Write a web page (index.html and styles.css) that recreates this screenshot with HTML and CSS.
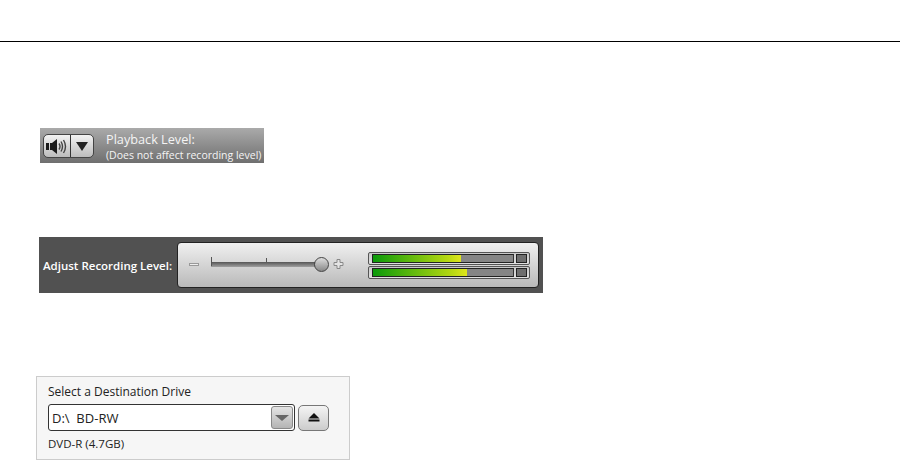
FILE: index.html
```html
<!DOCTYPE html>
<html>
<head>
  <title>Recording controls</title>
  <link rel="stylesheet" href="styles.css">
</head>
<body>
  <hr class="topRule">

  <div class="playback">
    <div class="splitBtn">
      <span class="splitPart speakerPart">
        <svg width="22" height="17" viewBox="0 0 22 17">
          <path d="M0 5h3v7H0zM4 5h2l5-4v15l-5-4H4z" fill="#1a1a1a"/>
          <path d="M13 5.500q2 3 0 6M15 3.500q3 5 0 10M17.500 2q4 6.500 0 13" fill="none" stroke="#444" stroke-width="1.400"/>
        </svg>
      </span>
      <span class="splitPart arrowPart"><span class="arrowDown"></span></span>
    </div>
    <div class="playbackText">
      <div class="playbackTitle">Playback Level:</div>
      <div class="playbackNote">(Does not affect recording level)</div>
    </div>
  </div>

  <div class="recording">
    <div class="recordingLabel">Adjust Recording Level:</div>
    <div class="recordingPanel">
      <span class="minus"></span>
      <div class="slider">
        <span class="tick tickStart"></span>
        <span class="tick tickMid"></span>
        <span class="thumb"></span>
      </div>
      <svg class="plus" width="11" height="11" viewBox="0 0 11 11">
        <path d="M4 .5h3v3h3v3H7v3H4v-3H1v-3h3z" fill="#e4e4e4" stroke="#888"/>
      </svg>
      <div class="meters">
        <div class="meter">
          <div class="meterTrack"><div class="meterFill" style="width: 63%"></div></div>
          <div class="meterPeak"></div>
        </div>
        <div class="meter">
          <div class="meterTrack"><div class="meterFill" style="width: 67%"></div></div>
          <div class="meterPeak"></div>
        </div>
      </div>
    </div>
  </div>

  <div class="drivePanel">
    <div class="driveTitle">Select a Destination Drive</div>
    <div class="driveRow">
      <div class="driveSelect">
        <span class="driveValue">D:\&nbsp; BD-RW</span>
        <span class="driveArrow"><span class="arrowDown arrowGrey"></span></span>
      </div>
      <div class="ejectBtn">
        <svg width="12" height="9" viewBox="0 0 12 9">
          <path d="M6 0l5.500 5.500H.5z" fill="#111"/>
          <rect x=".5" y="6.500" width="11" height="2" fill="#111"/>
        </svg>
      </div>
    </div>
    <div class="driveMedia">DVD-R (4.7GB)</div>
  </div>
</body>
</html>
```

FILE: styles.css
```css
body {
    margin: 0;
    background: #fff;
    height: 460px;
    overflow: hidden;
    font-family: "Open Sans", "Noto Sans", sans-serif;
}

.topRule {
    margin: 41px 0 0 0;
    border: 0;
    height: 1px;
    background: #000;
}

/* playback bar */
.playback {
    display: flex;
    align-items: center;
    width: 224px;
    height: 35px;
    margin: 86px 0 0 40px;
    background: linear-gradient(#aaa, #6f6f6f);
    color: #f4f4f4;
}

.splitBtn {
    display: flex;
    width: 51px;
    height: 24px;
    margin: 1px 0 0 3px;
    border: 1px solid #444;
    border-radius: 5px;
    background: linear-gradient(#f2f2f2, #bcbcbc);
    box-sizing: border-box;
}

.splitPart {
    display: flex;
    align-items: center;
    justify-content: center;
}

.speakerPart {
    width: 26px;
    border-right: 1px solid #333;
}

.arrowPart {
    flex: 1;
}

.arrowDown {
    width: 0;
    height: 0;
    border-left: 6px solid transparent;
    border-right: 6px solid transparent;
    border-top: 9px solid #222;
}

.playbackText {
    margin-left: 12px;
}

.playbackTitle {
    font-size: 12.700px;
    line-height: 18px;
}

.playbackNote {
    font-size: 10.500px;
    line-height: 14px;
    white-space: nowrap;
}

/* recording level */
.recording {
    display: flex;
    align-items: center;
    width: 504px;
    height: 56px;
    margin: 74px 0 0 39px;
    padding: 0 4px;
    box-sizing: border-box;
    background: #515151;
}

.recordingLabel {
    width: 134px;
    color: #fff;
    font-size: 11.500px;
    font-weight: 600;
    white-space: nowrap;
}

.recordingPanel {
    display: flex;
    align-items: center;
    width: 362px;
    height: 46px;
    box-sizing: border-box;
    border: 1px solid #222;
    border-radius: 4px;
    background: linear-gradient(#f0f0f0, #b9b9b9);
}

.minus {
    width: 10px;
    height: 3px;
    margin: -1px 0 0 11px;
    border: 1px solid #999;
    box-sizing: border-box;
    background: #eee;
}

.slider {
    position: relative;
    width: 111px;
    height: 5px;
    margin: -1px 0 0 12px;
    background: linear-gradient(#555, #a0a0a0);
}

.tick {
    position: absolute;
    width: 1px;
    background: #555;
}

.tickStart {
    left: 0;
    top: -5px;
    height: 9px;
}

.tickMid {
    left: 55px;
    top: -4px;
    height: 4px;
}

.thumb {
    position: absolute;
    right: -7px;
    top: -5px;
    width: 15px;
    height: 15px;
    box-sizing: border-box;
    border: 1px solid #444;
    border-radius: 50%;
    background: linear-gradient(#ddd, #888);
}

.plus {
    margin: -1px 0 0 11px;
}

.meters {
    display: flex;
    flex-direction: column;
    gap: 1px;
    margin-left: 24px;
}

.meter {
    display: flex;
    align-items: center;
    gap: 2px;
    width: 162px;
    height: 13px;
    padding: 0 2px 0 3px;
    box-sizing: border-box;
    border: 1px solid #555;
    border-radius: 2px;
    background: linear-gradient(#c8c8c8, #e0e0e0);
}

.meterTrack {
    flex: 1;
    height: 7px;
    background: #858585;
    border: 1px solid #222;
    border-right-color: #333;
}

.meterFill {
    height: 100%;
    background: linear-gradient(90deg, #0a9a0a, #b8d812 85%, #e0e61c);
}

.meterPeak {
    width: 9px;
    height: 7px;
    border: 1px solid #222;
    background: #6e6e6e;
}

/* destination drive */
.drivePanel {
    width: 314px;
    height: 84px;
    margin: 83px 0 0 36px;
    padding: 7px 11px 0 11px;
    box-sizing: border-box;
    border: 1px solid #ccc;
    background: #f6f6f6;
    font-size: 12px;
    color: #222;
}

.driveTitle {
    line-height: 16px;
}

.driveRow {
    display: flex;
    align-items: center;
    gap: 3px;
    margin-top: 4px;
}

.driveSelect {
    display: flex;
    align-items: center;
    justify-content: space-between;
    width: 247px;
    height: 27px;
    box-sizing: border-box;
    border: 1px solid #333;
    border-radius: 3px;
    background: #fff;
}

.driveValue {
    margin-left: 3px;
    font-size: 13px;
}

.driveArrow {
    display: flex;
    align-items: center;
    justify-content: center;
    width: 22px;
    height: 23px;
    margin-right: 1px;
    border: 1px solid #888;
    border-radius: 3px;
    box-sizing: border-box;
    background: linear-gradient(#e4e4e4, #b4b4b4);
}

.arrowGrey {
    border-left-width: 7px;
    border-right-width: 7px;
    border-top: 6px solid #666;
}

.ejectBtn {
    display: flex;
    align-items: center;
    justify-content: center;
    width: 31px;
    height: 26px;
    box-sizing: border-box;
    border: 1px solid #777;
    border-radius: 5px;
    background: linear-gradient(#f4f4f4, #ccc);
}

.driveMedia {
    margin-top: 5px;
    font-size: 11.500px;
    line-height: 16px;
}
```
